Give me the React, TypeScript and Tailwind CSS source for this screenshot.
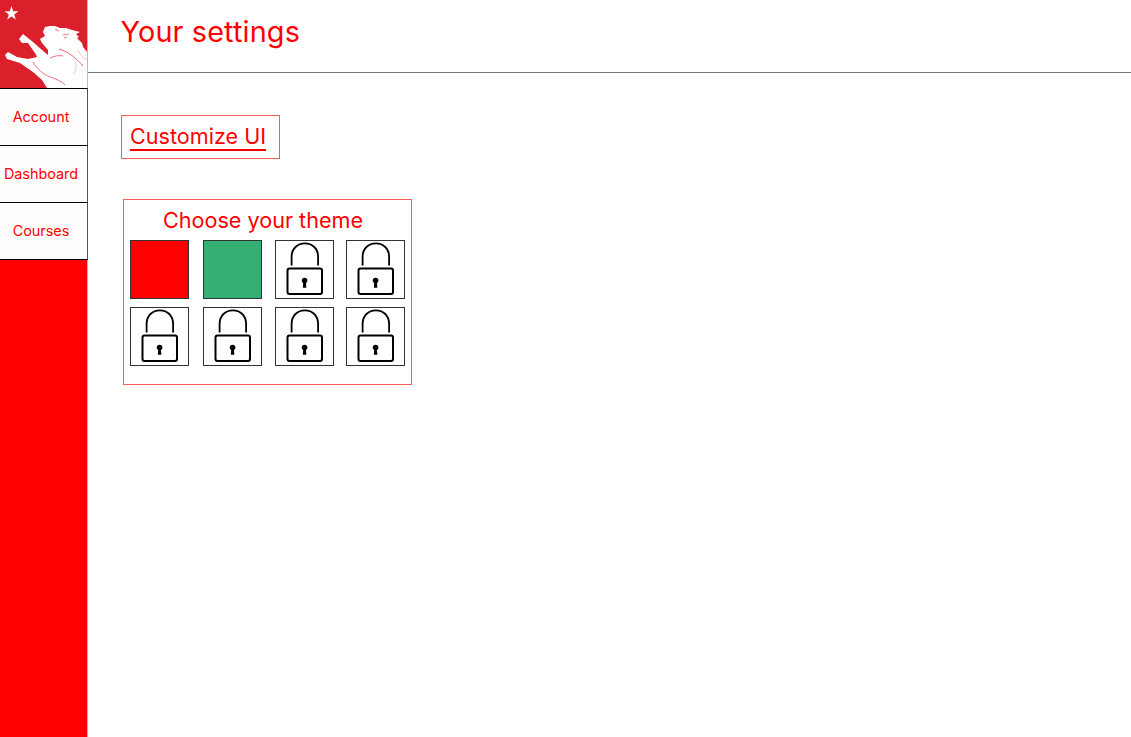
const inter = { fontFamily: "Inter, sans-serif" };

function Lion() {
  return (
    <svg viewBox="0 0 87 88" className="block h-[88px] w-[87px]">
      <rect width="87" height="88" fill="#dc202b" />
      <polygon fill="#fff" points="11.5,6 13.2,11.2 18.5,11.2 14.2,14.4 15.8,19.5 11.5,16.5 7.2,19.5 8.8,14.4 4.5,11.2 9.8,11.2" />
      <path
        fill="#fff"
        d="M45 27 L50 26 L55 26 L60 28 L66 28 L72 30 L80 32 L76 34 L79 37 L77 38 L82 43 L83 47 L87 52 L87 88 L47 88 L42 80 L33 72 L20 63 L7 59 L5 55 L8 52 L17 57 L28 59 L37 57 L35 53 L28 43 L22 43 L19 39 L23 34 L28 38 L33 42 L42 50 L48 55 L48 50 L42 43 L40 39 L45 36 L43 32 Z"
      />
      <path fill="none" stroke="#e9636b" strokeWidth="0.9" d="M50 58 C54 56 59 55 63 56" />
      <path fill="none" stroke="#e9636b" strokeWidth="1" d="M59 49 C66 51 72 55 76 59 C78 61 81 63 83 66" />
      <path fill="none" stroke="#f2aeb1" strokeWidth="0.8" d="M78 50 C80 54 83 58 87 60 M75 62 C77 66 76 70 74 74" />
      <path fill="none" stroke="#e9636b" strokeWidth="0.9" d="M33 62 C37 69 43 74 50 77 C56 79 61 81 65 85" />
      <path fill="none" stroke="#ec8a8f" strokeWidth="1.2" d="M55 29 L59 31 M63 35 L69 34 M64 38 L67 37" />
    </svg>
  );
}

function Lock() {
  return (
    <svg viewBox="1 1 57 57" className="block h-full w-full" fill="none" stroke="#000">
      <path strokeWidth="1.8" d="M16.6 25.5 V17 C16.6 8.5 22.5 3.4 29.9 3.4 C37.3 3.4 43.1 8.5 43.1 17 V25.5" />
      <rect x="12.5" y="28.5" width="34.5" height="25.5" rx="2" strokeWidth="2" />
      <circle cx="29.6" cy="40.5" r="2.8" fill="#000" stroke="none" />
      <path d="M28.3 41.5 H30.9 L31.3 47.7 H27.9 Z" fill="#000" stroke="none" />
    </svg>
  );
}

function Tile({ color, className }: { color?: string; className: string }) {
  return (
    <div className={`h-[59px] w-[59px] shrink-0 border border-[#333] ${color ?? "bg-white"} ${className}`}>
      {!color && <Lock />}
    </div>
  );
}

function NavItem({ label }: { label: string }) {
  return (
    <a className="flex h-[57px] items-center justify-center border-t border-r border-black border-r-[#555] bg-[#fffdfb] pr-[5px] pb-[1px] text-[14.4px] text-[#ff0000]">
      {label}
    </a>
  );
}

export default function App() {
  return (
    <div className="flex h-[737px] w-[1131px] overflow-hidden bg-white" style={inter}>
      <aside className="flex w-[88px] shrink-0 flex-col border-r border-[#f4a6a6] bg-[#ff0000]">
        <Lion />
        <nav className="-mr-px flex flex-col border-b border-black">
          <NavItem label="Account" />
          <NavItem label="Dashboard" />
          <NavItem label="Courses" />
        </nav>
      </aside>
      <main className="min-w-0 flex-1">
        <header className="h-[73px] border-b border-[#777] pl-[32.5px] pt-[13px]">
          <h1 className="text-[28.8px] leading-[38px] font-normal tracking-[0.15px] text-[#ff0000]">Your settings</h1>
        </header>
        <div className="pl-[33px] pt-[42px]">
          <div className="h-[44px] w-[159px] border border-[#ff5a5a] pl-[8px] pt-[7px]">
            <a className="block w-fit border-b-2 border-[#ff0000] text-[21.6px] leading-[26px] text-[#ff0000]">Customize UI</a>
          </div>
          <section className="ml-[2px] mt-[40px] h-[186px] w-[289px] border border-[#ff5a5a] pl-[6px] pt-[6px]">
            <h2 className="w-[266px] text-center text-[21.6px] leading-[28px] font-normal text-[#ff0000]">Choose your theme</h2>
            <div className="mt-[6px] flex">
              <Tile color="bg-[#ff0000]" className="" />
              <Tile color="bg-[#35b074]" className="ml-[14px]" />
              <Tile className="ml-[13px]" />
              <Tile className="ml-[12px]" />
            </div>
            <div className="mt-[8px] flex">
              <Tile className="" />
              <Tile className="ml-[14px]" />
              <Tile className="ml-[13px]" />
              <Tile className="ml-[12px]" />
            </div>
          </section>
        </div>
      </main>
    </div>
  );
}
